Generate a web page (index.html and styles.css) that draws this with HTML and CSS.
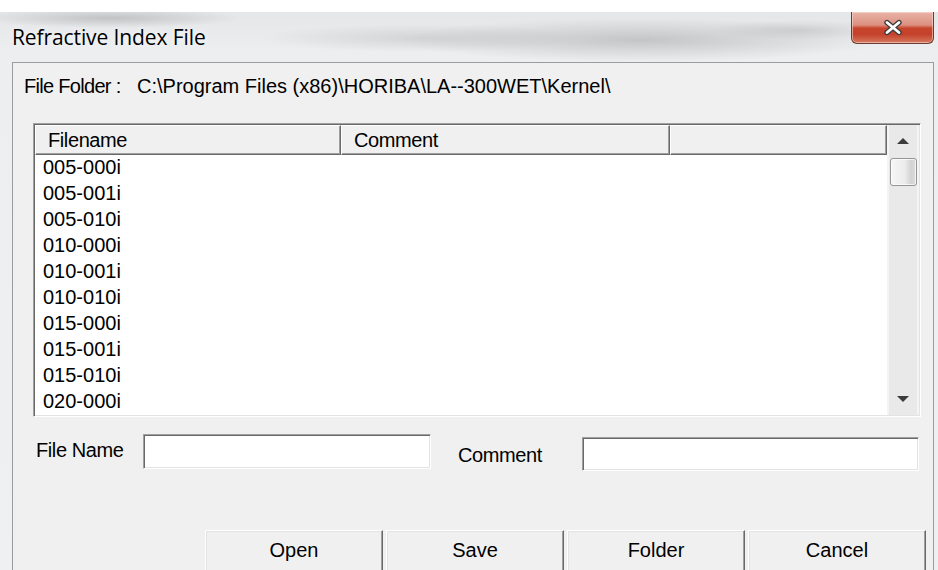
FILE: index.html
```html
<!DOCTYPE html>
<html lang="en">
<head>
<meta charset="utf-8">
<title>Refractive Index File</title>
<link rel="stylesheet" href="styles.css">
</head>
<body>
<div class="window">
  <div class="titlebar">
    <span class="title">Refractive Index File</span>
    <button class="close" type="button" aria-label="Close">
      <svg width="22" height="17" viewBox="0 0 22 17">
        <path d="M5 3.5 L17 13.5 M17 3.5 L5 13.5" stroke="#3b3b3b" stroke-width="5.4" stroke-linecap="round" fill="none"/>
        <path d="M5 3.5 L17 13.5 M17 3.5 L5 13.5" stroke="#ffffff" stroke-width="2.8" stroke-linecap="round" fill="none"/>
      </svg>
    </button>
  </div>

  <div class="client">
    <div class="folder">
      <span class="folder-label">File Folder :</span>
      <span class="folder-path">C:\Program Files (x86)\HORIBA\LA--300WET\Kernel\</span>
    </div>

    <div class="listview">
      <div class="lv-main">
        <div class="lv-header">
          <div class="col c1">Filename</div>
          <div class="col c2">Comment</div>
          <div class="col c3"></div>
        </div>
        <ul class="lv-rows">
          <li>005-000i</li>
          <li>005-001i</li>
          <li>005-010i</li>
          <li>010-000i</li>
          <li>010-001i</li>
          <li>010-010i</li>
          <li>015-000i</li>
          <li>015-001i</li>
          <li>015-010i</li>
          <li>020-000i</li>
        </ul>
      </div>
      <div class="vscroll">
        <div class="arrow up"></div>
        <div class="thumb"></div>
        <div class="track"></div>
        <div class="arrow down"></div>
      </div>
    </div>

    <div class="fields">
      <label class="lbl lbl-name" for="fname">File Name</label>
      <input class="edit edit-name" id="fname" type="text">
      <label class="lbl lbl-comment" for="fcomment">Comment</label>
      <input class="edit edit-comment" id="fcomment" type="text">
    </div>

    <div class="buttons">
      <button class="btn" type="button">Open</button>
      <button class="btn" type="button">Save</button>
      <button class="btn" type="button">Folder</button>
      <button class="btn" type="button">Cancel</button>
    </div>
  </div>
</div>
</body>
</html>
```

FILE: styles.css
```css
html, body {
  margin: 0;
  padding: 0;
}

body {
  width: 938px;
  height: 570px;
  overflow: hidden;
  background: #ffffff;
  font-family: "Liberation Sans", Arial, sans-serif;
  font-size: 20px;
  color: #000;
}

/* Aero-style frame with its soft glassy title area */
.window {
  box-sizing: border-box;
  margin-top: 12px;
  height: 558px;
  padding: 0 4px 0 12px;
  display: flex;
  flex-direction: column;
  background:
    radial-gradient(ellipse 130px 10px at 110px 6px, rgba(150, 150, 150, 0.45), rgba(150, 150, 150, 0)),
    radial-gradient(ellipse 240px 22px at 640px 28px, rgba(165, 165, 165, 0.55), rgba(165, 165, 165, 0)),
    radial-gradient(ellipse 160px 14px at 420px 26px, rgba(185, 185, 185, 0.45), rgba(185, 185, 185, 0)),
    radial-gradient(ellipse 90px 10px at 800px 18px, rgba(175, 175, 175, 0.4), rgba(175, 175, 175, 0)),
    linear-gradient(#e4e6e8, #eceef0 40px, #eff0f2);
}

.titlebar {
  height: 50px;
  flex: none;
  display: flex;
  align-items: flex-start;
}

.title {
  margin-top: 11px;
  font-family: "Open Sans", "Liberation Sans", sans-serif;
  font-size: 21px;
  line-height: 28px;
  letter-spacing: -0.1px;
  color: #000;
  text-shadow: 0 0 6px rgba(255, 255, 255, 0.9);
}

.close {
  margin-left: auto;
  width: 83px;
  height: 32px;
  padding: 0;
  display: flex;
  align-items: center;
  justify-content: center;
  border: 1px solid #6b3a33;
  border-top: none;
  border-radius: 0 0 6px 6px;
  background: linear-gradient(#e8b4a8 0%, #dc9080 42%, #c8452d 52%, #c4412a 72%, #d67a60 100%);
  box-shadow: inset 0 0 0 1px rgba(255, 225, 215, 0.55);
}

.close svg {
  display: block;
}

/* dialog client area */
.client {
  flex: 1;
  overflow: hidden;
  background: #f0f0f0;
  border: 1px solid #9c9c9c;
  border-bottom: none;
}

.folder {
  display: flex;
  margin: 12px 0 0 11px;
  height: 22px;
  line-height: 22px;
}

.folder-label {
  width: 113px;
  letter-spacing: -0.7px;
}

/* list view */
.listview {
  box-sizing: border-box;
  display: flex;
  margin: 26px 0 0 20px;
  width: 888px;
  height: 294px;
  padding: 1px;
  border: 1px solid;
  border-color: #a0a0a0 #ffffff #ffffff #a0a0a0;
  box-shadow: inset 1px 1px 0 #696969, inset -1px -1px 0 #e3e3e3;
}

.lv-main {
  flex: 1;
  display: flex;
  flex-direction: column;
  background: #ffffff;
}

.lv-header {
  display: flex;
  height: 30px;
  flex: none;
  background: #f0f0f0;
}

.col {
  box-sizing: border-box;
  height: 30px;
  padding-left: 12px;
  line-height: 28px;
  border: 1px solid;
  border-color: #ffffff #696969 #696969 #ffffff;
  box-shadow: inset -1px -1px 0 #a0a0a0;
  letter-spacing: -0.4px;
}

.c1 { width: 306px; }
.c2 { width: 329px; }
.c3 { width: 217px; }

.lv-rows {
  list-style: none;
  margin: 0;
  padding: 0;
}

.lv-rows li {
  height: 26px;
  line-height: 25px;
  padding-left: 8px;
}

/* vertical scroll bar */
.vscroll {
  width: 32px;
  flex: none;
  display: flex;
  flex-direction: column;
  background: #e9e9e9;
  box-shadow: inset 2px 0 0 #f4f4f4, inset -2px 0 0 #f4f4f4;
}

.arrow {
  height: 32px;
  flex: none;
  display: flex;
  align-items: center;
  justify-content: center;
}

.arrow::before {
  content: "";
  width: 0;
  height: 0;
  border-left: 6px solid transparent;
  border-right: 6px solid transparent;
}

.arrow.up::before {
  border-bottom: 6px solid #3c3c3c;
}

.arrow.down::before {
  border-top: 6px solid #3c3c3c;
}

.thumb {
  box-sizing: border-box;
  height: 28px;
  margin: 1px 2px 0 3px;
  flex: none;
  border: 1px solid #959595;
  border-radius: 3px;
  background: linear-gradient(to right, #f6f6f6 0%, #ececec 55%, #d2d2d2 80%, #dddddd 100%);
  box-shadow: inset 0 0 0 1px rgba(255, 255, 255, 0.7);
}

.track {
  flex: 1;
}

/* name / comment fields */
.fields {
  display: flex;
  align-items: flex-start;
  margin-top: 17px;
  padding-left: 23px;
}

.lbl {
  line-height: 22px;
  flex: none;
  letter-spacing: -0.4px;
}

.lbl-name {
  width: 107px;
  margin-top: 5px;
}

.lbl-comment {
  width: 124px;
  margin-left: 27px;
  margin-top: 10px;
}

.edit {
  box-sizing: border-box;
  margin: 0;
  padding: 0 4px;
  font: inherit;
  background: #ffffff;
  border: 1px solid;
  border-color: #a0a0a0 #ffffff #ffffff #a0a0a0;
  box-shadow: inset 1px 1px 0 #696969, inset -1px -1px 0 #e3e3e3;
  outline: none;
}

.edit-name {
  width: 288px;
  height: 35px;
}

.edit-comment {
  width: 337px;
  height: 34px;
  margin-top: 3px;
}

/* push buttons */
.buttons {
  display: flex;
  gap: 3px;
  margin-top: 59px;
  padding-left: 192px;
}

.btn {
  box-sizing: border-box;
  width: 178px;
  height: 44px;
  padding: 0 0 4px;
  display: flex;
  align-items: center;
  justify-content: center;
  font: inherit;
  color: #000;
  background: #f0f0f0;
  border: 1px solid;
  border-color: #ffffff #696969 #696969 #ffffff;
  box-shadow: inset -1px -1px 0 #a0a0a0, inset 1px 1px 0 #e3e3e3;
}
```
